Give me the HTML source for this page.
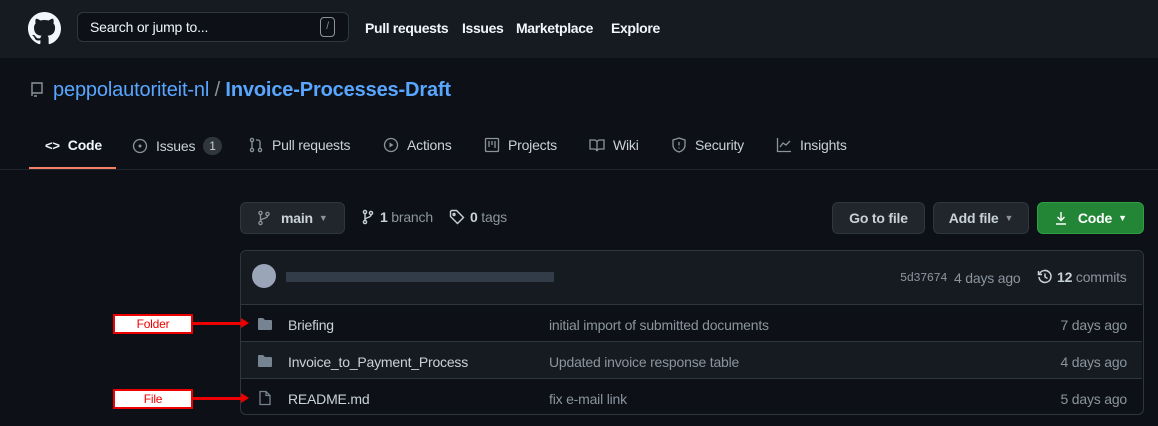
<!DOCTYPE html>
<html><head><style>
*{margin:0;padding:0;box-sizing:border-box}
body{width:1158px;height:426px;background:#0d1117;font-family:"Liberation Sans",sans-serif;color:#c9d1d9;position:relative;overflow:hidden;font-size:14px;letter-spacing:-0.2px}
.a{position:absolute;white-space:nowrap}
svg{display:block}
.hdr{position:absolute;left:0;top:0;width:1158px;height:58px;background:#161b22}
.nav{font-weight:bold;color:#f0f6fc;font-size:14px;top:20px;letter-spacing:-0.35px}
.tab{top:137px;color:#c9d1d9;font-size:14px;display:flex;align-items:center;gap:8px}
.btn{position:absolute;top:202px;height:32px;border:1px solid #30363d;background:#21262d;border-radius:6px;font-weight:bold;color:#c9d1d9;display:flex;align-items:center;justify-content:center;font-size:14px;gap:6px}
.row{position:absolute;left:241px;width:901px;border-top:1px solid #30363d;height:37px}
.gray{color:#8b949e}
.lbl{position:absolute;left:113px;width:80px;height:20px;background:#fff;border:2px solid #e00;color:#e00;font-size:12px;text-align:center;line-height:16px}
.arr{position:absolute;left:193px;height:3px;background:#e00;width:50px}
.arr:after{content:"";position:absolute;right:-6px;top:-4px;border-left:8px solid #e00;border-top:5px solid transparent;border-bottom:5px solid transparent}
</style></head><body>
<div class="hdr"></div>
<svg class="a" style="left:28px;top:12px" width="33" height="33" viewBox="0 0 16 16"><path fill="#f0f6fc" d="M8 0C3.580 0 0 3.58 0 8c0 3.54 2.290 6.53 5.47 7.59.4.07.55-.17.55-.38 0-.19-.01-.82-.01-1.49-2.01.37-2.53-.49-2.69-.94-.09-.23-.48-.94-.82-1.130-.28-.15-.68-.52-.01-.53.63-.01 1.080.58 1.230.82.72 1.21 1.870.87 2.330.66.07-.52.28-.87.51-1.07-1.78-.2-3.64-.89-3.64-3.95 0-.87.31-1.59.82-2.15-.08-.2-.36-1.02.08-2.12 0 0 .67-.21 2.2.82.64-.18 1.32-.27 2-.27.68 0 1.36.09 2 .27 1.53-1.04 2.2-.82 2.2-.82.44 1.1.16 1.92.08 2.12.51.56.82 1.27.82 2.15 0 3.07-1.87 3.75-3.65 3.95.29.25.54.73.54 1.48 0 1.07-.01 1.930-.01 2.2 0 .21.15.46.55.38A8.013 8.013 0 0016 8c0-4.42-3.58-8-8-8z"/></svg>
<div class="a" style="left:77px;top:12px;width:272px;height:30px;border:1px solid #30363d;border-radius:6px;background:#0d1117"></div>
<div class="a" style="left:90px;top:19px;color:#f0f6fc;font-size:14px">Search or jump to...</div>
<div class="a" style="left:320px;top:17px;width:15px;height:20px;border:1px solid #8b949e;border-radius:4px;color:#8b949e;font-size:10px;text-align:center;line-height:18px">/</div>
<div class="a nav" style="left:365px">Pull requests</div>
<div class="a nav" style="left:462px">Issues</div>
<div class="a nav" style="left:516px">Marketplace</div>
<div class="a nav" style="left:611px">Explore</div>

<svg class="a" style="left:30px;top:82px" width="14" height="16" viewBox="0 0 14 16"><path fill="none" stroke="#8b949e" stroke-width="1.4" d="M2 1h10v10H2zM2 11v3M4 14h3" /></svg>
<div class="a" style="left:53px;top:79px;font-size:20px;color:#58a6ff;letter-spacing:-0.15px">peppolautoriteit-nl <span style="color:#8b949e">/</span> <b>Invoice-Processes-Draft</b></div>

<div class="a tab" style="left:45px;font-weight:bold;color:#f0f6fc"><span style="font-size:13px">&lt;&gt;</span>Code</div>
<div class="a" style="left:29px;top:167px;width:87px;height:2px;background:#f78166"></div>
<div class="a tab" style="left:132px"><svg width="16" height="16"><circle cx="8" cy="8" r="6.5" fill="none" stroke="#8b949e" stroke-width="1.3"/><circle cx="8" cy="8" r="1.5" fill="#8b949e"/></svg>Issues <span style="background:#30363d;border-radius:10px;padding:2px 6px;font-size:12px">1</span></div>
<div class="a tab" style="left:248px"><svg width="16" height="16"><g fill="none" stroke="#8b949e" stroke-width="1.3"><circle cx="4" cy="3" r="1.6"/><circle cx="4" cy="13" r="1.6"/><circle cx="12" cy="13" r="1.6"/><path d="M4 5v6M12 11V5a2 2 0 0 0-2-2H8"/></g></svg>Pull requests</div>
<div class="a tab" style="left:383px"><svg width="16" height="16"><circle cx="8" cy="8" r="6.5" fill="none" stroke="#8b949e" stroke-width="1.3"/><path d="M6.5 5.5v5l4-2.5z" fill="#8b949e"/></svg>Actions</div>
<div class="a tab" style="left:484px"><svg width="16" height="16"><g fill="none" stroke="#8b949e" stroke-width="1.3"><rect x="1.5" y="1.5" width="13" height="13" rx="1"/><path d="M5 4v6M8 4v4M11 4v7"/></g></svg>Projects</div>
<div class="a tab" style="left:589px"><svg width="16" height="16"><g fill="none" stroke="#8b949e" stroke-width="1.3"><path d="M1 3h4a3 3 0 0 1 3 2v9a3 3 0 0 0-3-2H1zM15 3h-4a3 3 0 0 0-3 2v9a3 3 0 0 1 3-2h4z"/></g></svg>Wiki</div>
<div class="a tab" style="left:671px"><svg width="16" height="16"><g fill="none" stroke="#8b949e" stroke-width="1.3"><path d="M8 1l6 2v5c0 4-3 6-6 7-3-1-6-3-6-7V3z"/><path d="M8 5v3.5M8 10.5v1"/></g></svg>Security</div>
<div class="a tab" style="left:776px"><svg width="16" height="16"><g fill="none" stroke="#8b949e" stroke-width="1.3"><path d="M1.5 1v13.5H15M4 10l3-4 3 2 4-4"/></g></svg>Insights</div>
<div class="a" style="left:0;top:169px;width:1158px;height:1px;background:#21262d"></div>

<div class="btn" style="left:240px;width:105px"><svg width="14" height="16"><g fill="none" stroke="#8b949e" stroke-width="1.3"><circle cx="3.5" cy="3" r="1.6"/><circle cx="3.5" cy="13" r="1.6"/><circle cx="10.5" cy="4" r="1.6"/><path d="M3.5 5v6M10.5 6c0 3-7 2-7 5"/></g></svg>&nbsp;main <span style="font-size:9px;color:#8b949e">▼</span></div>
<div class="a" style="left:362px;top:209px;display:flex;gap:6px;align-items:center"><svg width="12" height="16"><g fill="none" stroke="#c9d1d9" stroke-width="1.4"><circle cx="3" cy="3" r="1.6"/><circle cx="3" cy="13" r="1.6"/><circle cx="9" cy="4" r="1.6"/><path d="M3 5v6M9 6c0 3-6 2-6 5"/></g></svg><span><b>1</b> <span class="gray">branch</span></span></div>
<div class="a" style="left:449px;top:209px;display:flex;gap:5px;align-items:center"><svg width="16" height="16"><g fill="none" stroke="#c9d1d9" stroke-width="1.4"><path d="M1.5 2.5v5l7 7 6-6-7-7h-5z"/><circle cx="5" cy="5.5" r="1"/></g></svg><span><b>0</b> <span class="gray">tags</span></span></div>
<div class="btn" style="left:832px;width:93px">Go to file</div>
<div class="btn" style="left:933px;width:96px">Add file <span style="font-size:9px;color:#8b949e">▼</span></div>
<div class="btn" style="left:1037px;width:107px;background:#238636;border-color:#2ea043;color:#fff"><svg width="14" height="16"><g fill="none" stroke="#fff" stroke-width="1.4"><path d="M7 2v8M3.5 7l3.5 3.5L10.5 7M2 14h10"/></g></svg>&nbsp;Code <span style="font-size:9px">▼</span></div>

<div class="a" style="left:240px;top:250px;width:904px;height:165px;border:1px solid #30363d;border-radius:6px;background:#0d1117"></div>
<div class="a" style="left:241px;top:251px;width:902px;height:53px;background:#161b22;border-radius:6px 6px 0 0"></div>
<div class="a" style="left:252px;top:264px;width:24px;height:24px;border-radius:50%;background:#9aa6b8"></div>
<div class="a" style="left:286px;top:272px;width:268px;height:10px;background:#3a4352;opacity:.8"></div>
<div class="a" style="left:900px;top:271px;font-family:'Liberation Mono',monospace;font-size:12px;color:#8b949e;letter-spacing:-0.5px">5d37674</div>
<div class="a gray" style="left:954px;top:270px">4 days ago</div>
<div class="a" style="left:1037px;top:269px;display:flex;gap:4px;align-items:center"><svg width="16" height="16"><g fill="none" stroke="#c9d1d9" stroke-width="1.5"><path d="M2.5 5A6 6 0 1 1 2 8"/><path d="M1.5 2v3.5H5M8 4.5V8l2.5 1.5"/></g></svg><span><b>12</b> <span class="gray">commits</span></span></div>

<div class="row" style="top:304px"></div>
<div class="row" style="top:341px;background:#161b22"></div>
<div class="row" style="top:378px;height:36px;border-radius:0 0 6px 6px"></div>
<svg class="a" style="left:257px;top:317px" width="16" height="14"><path d="M1 2a1 1 0 0 1 1-1h4l2 2h6a1 1 0 0 1 1 1v8a1 1 0 0 1-1 1H2a1 1 0 0 1-1-1z" fill="#768390"/></svg>
<svg class="a" style="left:257px;top:354px" width="16" height="14"><path d="M1 2a1 1 0 0 1 1-1h4l2 2h6a1 1 0 0 1 1 1v8a1 1 0 0 1-1 1H2a1 1 0 0 1-1-1z" fill="#768390"/></svg>
<svg class="a" style="left:258px;top:390px" width="14" height="16"><path d="M2 1.5h6l4 4v9H2z M8 1.5v4h4" fill="none" stroke="#768390" stroke-width="1.3"/></svg>
<div class="a" style="left:288px;top:317px">Briefing</div>
<div class="a" style="left:288px;top:354px">Invoice_to_Payment_Process</div>
<div class="a" style="left:288px;top:391px">README.md</div>
<div class="a gray" style="left:549px;top:317px">initial import of submitted documents</div>
<div class="a gray" style="left:549px;top:354px">Updated invoice response table</div>
<div class="a gray" style="left:549px;top:391px">fix e-mail link</div>
<div class="a gray" style="right:31px;top:317px">7 days ago</div>
<div class="a gray" style="right:31px;top:354px">4 days ago</div>
<div class="a gray" style="right:31px;top:391px">5 days ago</div>

<div class="lbl" style="top:314px">Folder</div>
<div class="arr" style="top:322px"></div>
<div class="lbl" style="top:389px">File</div>
<div class="arr" style="top:397px"></div>
</body></html>
